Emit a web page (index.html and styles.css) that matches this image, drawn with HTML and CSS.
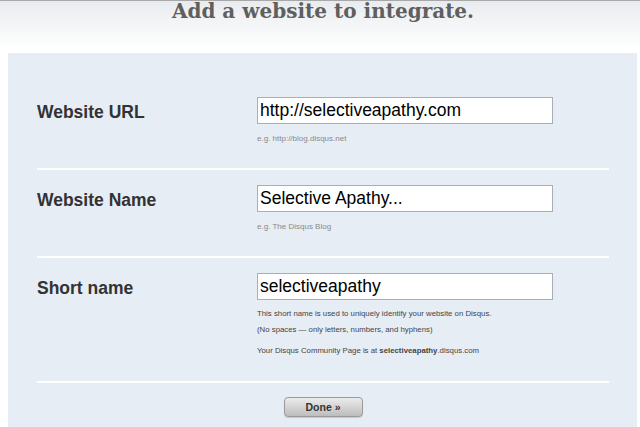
FILE: index.html
```html
<!DOCTYPE html>
<html>
<head>
<meta charset="utf-8">
<link rel="stylesheet" href="styles.css">
</head>
<body>
<div class="header">
  <h1 class="title">Add a website to integrate.</h1>
</div>
<div class="panel">
  <div class="row">
    <div class="label">Website URL</div>
    <div class="field">
      <div class="input">http://selectiveapathy.com</div>
      <div class="hint">e.g. http://blog.disqus.net</div>
    </div>
  </div>
  <div class="row">
    <div class="label">Website Name</div>
    <div class="field">
      <div class="input">Selective Apathy...</div>
      <div class="hint">e.g. The Disqus Blog</div>
    </div>
  </div>
  <div class="row row-last">
    <div class="label">Short name</div>
    <div class="field">
      <div class="input">selectiveapathy</div>
      <div class="note note-first">This short name is used to uniquely identify your website on Disqus.</div>
      <div class="note">(No spaces — only letters, numbers, and hyphens)</div>
      <div class="note note-gap">Your Disqus Community Page is at <b>selectiveapathy</b>.disqus.com</div>
    </div>
  </div>
  <div class="actions">
    <div class="button">Done »</div>
  </div>
</div>
</body>
</html>
```

FILE: styles.css
```css
html, body {
  margin: 0;
  padding: 0;
  background: #ffffff;
  overflow: hidden;
}
body {
  height: 100vh;
  box-sizing: border-box;
  border-top: 1px solid #a8a8a8;
  font-family: "Liberation Sans", Arial, sans-serif;
  display: flex;
  flex-direction: column;
}
.header {
  height: 52px;
  flex: none;
  background: linear-gradient(to bottom, #e9ecef 0%, #f6f7f8 55%, #ffffff 90%);
}
.title {
  margin: 0;
  padding-left: 6px;
  font-family: "DejaVu Serif", Georgia, serif;
  font-weight: bold;
  font-size: 20px;
  line-height: 20px;
  color: #5f5f5f;
  text-align: center;
}
.panel {
  flex: 1;
  margin: 0 3px 0 8px;
  background: #e6edf5;
  padding: 29px 28px 0 29px;
}
.row {
  display: flex;
  padding: 15px 0 23px;
  border-bottom: 2px solid #ffffff;
}
.row-last {
  padding-bottom: 24px;
}
.label {
  width: 220px;
  flex: none;
  font-size: 17.5px;
  font-weight: bold;
  color: #333333;
  line-height: 27px;
  padding-top: 2px;
}
.field {
  display: flex;
  flex-direction: column;
}
.input {
  width: 292px;
  height: 25px;
  border: 1px solid #a7afb6;
  background: #ffffff;
  padding-left: 2px;
  font-size: 17.5px;
  line-height: 25px;
  color: #000000;
}
.hint {
  margin-top: 9px;
  font-size: 8px;
  line-height: 12px;
  color: #8a8a8a;
}
.note {
  font-size: 7.8px;
  line-height: 12px;
  color: #444444;
  margin-top: 4px;
}
.note-first {
  margin-top: 8px;
}
.note-gap {
  margin-top: 9px;
}
.actions {
  display: flex;
  justify-content: center;
  padding-top: 14px;
}
.button {
  width: 77px;
  height: 18px;
  border: 1px solid #9a9a9a;
  border-radius: 4px;
  background: linear-gradient(to bottom, #ececec 0%, #d4d4d4 50%, #bdbdbd 100%);
  box-shadow: 0 1px 1px rgba(0,0,0,0.15);
  font-size: 10.5px;
  font-weight: bold;
  color: #333333;
  text-align: center;
  line-height: 18px;
}
```
